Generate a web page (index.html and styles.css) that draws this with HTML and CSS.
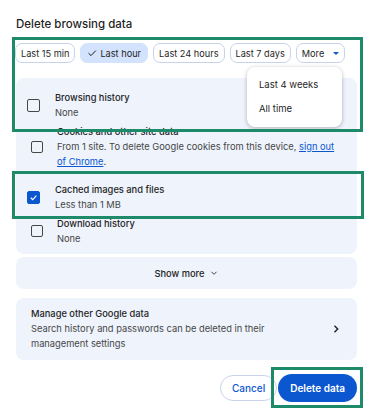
FILE: index.html
```html
<!DOCTYPE html>
<html lang="en">
<head>
    <meta charset="UTF-8">
    <meta name="viewport" content="width=device-width, initial-scale=1.0">
    <title>Delete browsing data</title>
    <link rel="stylesheet" href="styles.css">
</head>
<body>
    <div class="dialog">
        <h1 class="title">Delete browsing data</h1>

        <div class="chips">
            <button class="chip">Last 15 min</button>
            <button class="chip selected">
                <svg width="10" height="10" viewBox="0 0 10 10"><path d="M1.5 5.2 L4 7.6 L8.8 2.6" fill="none" stroke="#1f1f1f" stroke-width="1"/></svg>
                Last hour
            </button>
            <button class="chip">Last 24 hours</button>
            <button class="chip">Last 7 days</button>
            <button class="chip">More <span class="caret"></span></button>
        </div>

        <div class="list">
            <div class="row focus">
                <span class="box"></span>
                <div class="text">
                    <div class="name">Browsing history</div>
                    <div class="sub">None</div>
                </div>
            </div>
            <div class="row">
                <span class="box"></span>
                <div class="text">
                    <div class="name">Cookies and other site data</div>
                    <div class="sub">From 1 site. To delete Google cookies from this device, <a href="#">sign out</a><br><a href="#">of Chrome</a>.</div>
                </div>
            </div>
            <div class="row focus spaced">
                <span class="box checked">
                    <svg width="9" height="9" viewBox="0 0 10 10"><path d="M2 5.3 L4.2 7.4 L8.2 3" fill="none" stroke="#fff" stroke-width="1.3"/></svg>
                </span>
                <div class="text">
                    <div class="name">Cached images and files</div>
                    <div class="sub">Less than 1 MB</div>
                </div>
            </div>
            <div class="row">
                <span class="box"></span>
                <div class="text">
                    <div class="name">Download history</div>
                    <div class="sub">None</div>
                </div>
            </div>
        </div>

        <div class="show-more">
            Show more
            <svg width="10" height="10" viewBox="0 0 10 10"><path d="M2.5 3.8 L5 6.3 L7.5 3.8" fill="none" stroke="#444746" stroke-width="1"/></svg>
        </div>

        <div class="manage">
            <div class="text">
                <div class="name">Manage other Google data</div>
                <div class="sub">Search history and passwords can be deleted in their management settings</div>
            </div>
            <svg width="10" height="10" viewBox="0 0 10 10"><path d="M3.5 1.8 L6.7 5 L3.5 8.2" fill="none" stroke="#1f1f1f" stroke-width="1.4"/></svg>
        </div>

        <div class="actions">
            <button class="btn cancel">Cancel</button>
            <button class="btn primary">Delete data</button>
        </div>

        <div class="menu">
            <div class="menu-item">Last 4 weeks</div>
            <div class="menu-item">All time</div>
        </div>

        <div class="mark mark-range"></div>
        <div class="mark mark-cache"></div>
        <div class="mark mark-delete"></div>
    </div>
</body>
</html>
```

FILE: styles.css
```css
* {
    margin: 0;
    padding: 0;
    box-sizing: border-box;
}

body {
    background: #fff;
    font-family: Inter, Roboto, 'Liberation Sans', sans-serif;
    color: #1f1f1f;
}

.dialog {
    position: relative;
    width: 375px;
    height: 417px;
    padding: 15px 18px 0 16px;
}

.title {
    font-size: 11.5px;
    font-weight: 500;
    line-height: 18px;
    color: #1f1f1f;
}

.chips {
    display: flex;
    gap: 5px;
    margin-top: 10px;
}

.chip {
    display: flex;
    align-items: center;
    justify-content: center;
    gap: 4px;
    height: 20px;
    padding: 0 5px;
    border: 1px solid #c7d3ea;
    border-radius: 7px;
    background: #fff;
    font-family: inherit;
    font-size: 9.2px;
    color: #1f1f1f;
}

.chip:first-child {
    margin-left: -1px;
}

.chip.selected {
    gap: 3px;
    background: #d3e3fd;
    border-color: #d3e3fd;
    padding: 0 6px;
}

.caret {
    width: 0;
    height: 0;
    margin-left: 5px;
    border-left: 3px solid transparent;
    border-right: 3px solid transparent;
    border-top: 3px solid #0b57d0;
}

.list {
    display: flex;
    flex-direction: column;
    gap: 4px;
    margin-top: 15px;
    padding: 12px 0 8px;
    background: #eef3fc;
    border-radius: 8px;
}

.row {
    display: flex;
    align-items: center;
    gap: 14px;
    padding: 0 18px 0 15px;
}

.row.focus {
    gap: 15px;
    padding-left: 11px;
}

.row.spaced {
    padding-top: 9px;
}

.box {
    flex: none;
    display: flex;
    align-items: center;
    justify-content: center;
    width: 12px;
    height: 12px;
    border: 1.5px solid #444746;
    border-radius: 2px;
}

.row.focus .box {
    width: 13px;
    height: 13px;
}

.box.checked {
    background: #0b57d0;
    border-color: #0b57d0;
}

.name {
    font-size: 9.3px;
    font-weight: 500;
    line-height: 15px;
    color: #1f1f1f;
}

.sub {
    font-size: 9.3px;
    line-height: 15px;
    color: #474747;
}

.sub a {
    color: #0b57d0;
}

.show-more {
    display: flex;
    align-items: center;
    justify-content: center;
    gap: 4px;
    height: 32px;
    margin-top: 3px;
    background: #eef3fc;
    border-radius: 8px;
    font-size: 9.3px;
    font-weight: 500;
    color: #1f1f1f;
}

.manage {
    display: flex;
    align-items: center;
    justify-content: space-between;
    margin-top: 9px;
    padding: 8px 16px 9px 15px;
    background: #eef3fc;
    border-radius: 8px;
}

.manage .text {
    width: 245px;
}

.actions {
    display: flex;
    justify-content: flex-end;
    align-items: center;
    gap: 1px;
    margin-top: 14px;
}

.btn {
    font-family: inherit;
    font-size: 10px;
    font-weight: 500;
    border-radius: 14px;
}

.cancel {
    height: 26px;
    padding: 0 11px;
    background: #fff;
    color: #0b57d0;
    border: 1px solid #c7d3ea;
}

.primary {
    height: 28px;
    padding: 0 12px;
    background: #0b57d0;
    color: #fff;
    border: none;
    font-weight: 600;
}

.menu {
    position: absolute;
    left: 247px;
    top: 67px;
    width: 95px;
    height: 60px;
    padding-top: 6px;
    background: #fff;
    border-radius: 8px;
    box-shadow: 0 1px 4px rgba(0, 0, 0, 0.28);
}

.menu-item {
    height: 24px;
    line-height: 24px;
    padding-left: 12px;
    font-size: 9.5px;
    color: #1f1f1f;
}

.mark {
    position: absolute;
    border: 3px solid #1d8a6a;
}

.mark-range {
    left: 12px;
    top: 37px;
    width: 351px;
    height: 95px;
}

.mark-cache {
    left: 12px;
    top: 171px;
    width: 352px;
    height: 48px;
}

.mark-delete {
    left: 271px;
    top: 367px;
    width: 92px;
    height: 41px;
}
```
